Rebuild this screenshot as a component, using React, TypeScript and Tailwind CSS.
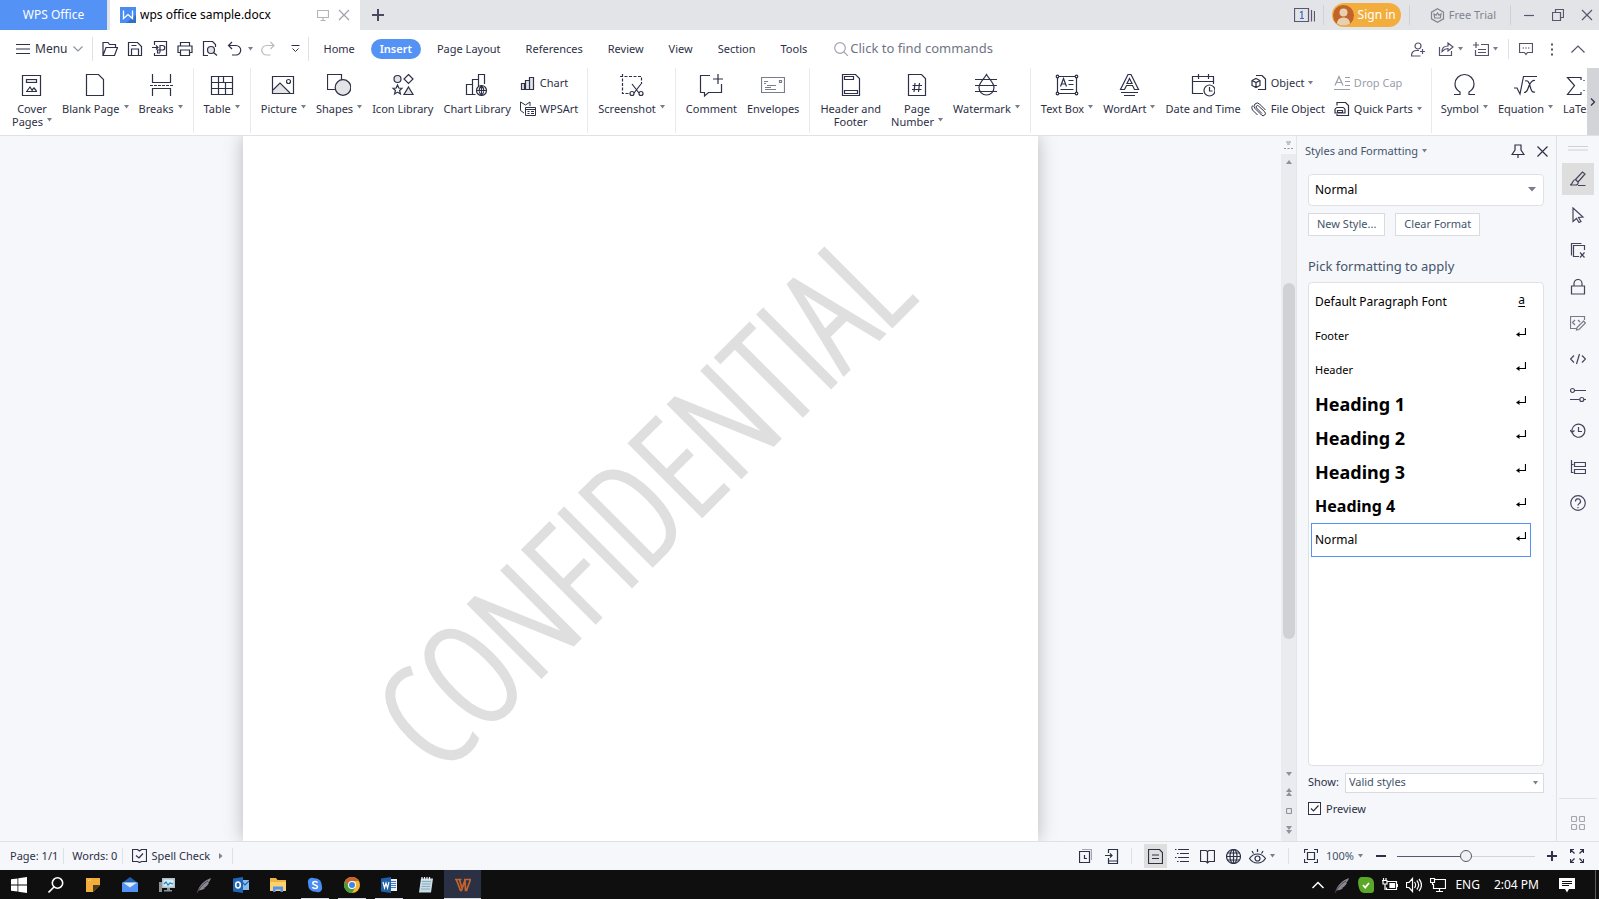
import React, { useState } from 'react';

type IconProps = { w?: number; h?: number; className?: string; children: React.ReactNode };

const Icon = ({ w = 16, h = 16, className = '', children }: IconProps) => (
  <svg
    width={w}
    height={h}
    viewBox={`0 0 ${w} ${h}`}
    fill="none"
    stroke="currentColor"
    strokeWidth="1.2"
    className={`shrink-0 ${className}`}
    aria-hidden="true"
  >
    {children}
  </svg>
);

const Caret = ({ className = '' }: { className?: string }) => (
  <svg width="5" height="4" viewBox="0 0 5 4" className={`shrink-0 ${className}`} aria-hidden="true">
    <path d="M0 0h5L2.5 3.5z" fill="#7a7d8a" />
  </svg>
);

const Sep = ({ className = '' }: { className?: string }) => <span className={`w-px shrink-0 ${className}`} />;

/* ---------- Ribbon icons, drawn on a 24px grid ---------- */

const ribbonIcons: Record<string, React.ReactNode> = {
  cover: (
    <>
      <path d="M2.5 2.5h18v20h-18z" />
      <path d="M6.5 6.5h10v3h-10z" fill="#e3e4e8" />
      <path d="M6 18.500h11M7 18l3-4 2.500 4M12 17l2-2 2.500 3" />
    </>
  ),
  blank: <path d="M3.500 1.500h12l5 5v16h-17z" />,
  breaks: (
    <>
      <path d="M3.500 1v8.500h18V1M3.500 23v-7.500h18V23" />
      <path d="M1 12.500h23" strokeDasharray="3 1" />
    </>
  ),
  table: <path d="M1.500 3.500h21v18h-21zM1.500 9.500h21M1.500 15.500h21M8.500 3.500v18M15.500 9.500v12M13.500 3.500v6" />,
  picture: (
    <>
      <path d="M2 18l7-7 10 10H2z" fill="#e3e4e8" stroke="none" />
      <path d="M1.500 3.500h21v17h-21zM2 17l7-7 10 10" />
      <circle cx="17.500" cy="8.500" r="2" />
    </>
  ),
  shapes: (
    <>
      <path d="M.5 1.500h14v15H.5z" />
      <circle cx="16" cy="14.500" r="7.800" fill="#e3e4e8" />
    </>
  ),
  iconlib: (
    <>
      <circle cx="6.500" cy="6" r="3.500" fill="#e3e4e8" />
      <path d="M17.500 1.500l4.500 4.500-4.500 4.500L13 6z" />
      <path d="M6.500 12l1.300 3 3.200.3-2.400 2.200.8 3.500-2.900-1.900L3.600 21l.8-3.500L2 15.300l3.200-.3z" />
      <path d="M17.500 14l4.500 7.500h-9z" fill="#e3e4e8" />
    </>
  ),
  chartlib: (
    <>
      <path d="M1.500 21.500v-10h6v10zM7.500 20V6.500h6V13M13.500 10V1.500h6V11M7.500 21.500h3" />
      <circle cx="16.500" cy="17.500" r="5" fill="#fff" />
      <path d="M11.500 17.500h10M16.500 12.500v10M16.500 12.500c-3 3-3 7 0 10M16.500 12.500c3 3 3 7 0 10" />
    </>
  ),
  screenshot: (
    <>
      <path d="M0 3.500h21.500V11M2.500 1v19.500H9" strokeDasharray="3 1.500" />
      <path d="M12 11l7 9M21 11l-7 9" />
      <circle cx="12" cy="20.500" r="2" />
      <circle cx="21" cy="20.500" r="2" />
    </>
  ),
  comment: (
    <path d="M11 2.500H1.500v17h4v3.500l4-3.500h13V11M19 1v10M14 6h10" />
  ),
  envelope: (
    <g stroke="#7a7d8a">
      <path d="M.5 4.500h23v15H.5zM3 8.500h4M3 10.500h2M6 12.500h9M4 16.500h11M4 14.500h6" />
      <path d="M18.500 7.500h2v2h-2z" />
    </g>
  ),
  header: (
    <>
      <path d="M3.500 1.500h13l4 4v17h-17z" />
      <path d="M5.500 3.500h9v3h-9zM5.500 17.500h13v3h-13z" />
    </>
  ),
  pagenum: (
    <>
      <path d="M3.500 1.500h13l4 4v17h-17z" />
      <path d="M10 10l-1 9M14.500 10l-1 9M7.500 12.500h9.500M7 16.500h9.500" />
    </>
  ),
  watermark: (
    <>
      <path d="M12.500 1.500c-2 4-7.500 8-7.500 13a7.500 7.500 0 0015 0c0-5-5.500-9-7.500-13z" />
      <path d="M1 6.500h22M1 12.500h22M1 18.500h22" />
    </>
  ),
  textbox: (
    <>
      <path d="M2.500 3.500h19v17h-19z" />
      <path d="M5.500 13.500l3-8 3 8M6.500 11h4M13.500 7.500h5M13.500 11.500h5M5.500 16.500h13" />
      <g fill="#fff">
        <circle cx="2.500" cy="3.500" r="1.300" />
        <circle cx="21.500" cy="3.500" r="1.300" />
        <circle cx="2.500" cy="20.500" r="1.300" />
        <circle cx="21.500" cy="20.500" r="1.300" />
      </g>
    </>
  ),
  wordart: (
    <>
      <path d="M11 1.500h3l7.500 15h-4l-2-4h-6l-2 4h-4zM12.500 5.500l2.500 5h-5z" />
      <path d="M4 19.500h17M7 22.500h11" />
    </>
  ),
  date: (
    <>
      <path d="M12 20.500H1.500v-17h21V11M1.500 8.500h21M7.500 1v5M17.500 1v5" />
      <circle cx="18.500" cy="17.500" r="5.500" fill="#fff" />
      <path d="M18.500 14v4h3" />
    </>
  ),
  symbol: (
    <path d="M2 21.500h6v-2.500C4.500 17 3 14 3 11a9.500 9.500 0 0119 0c0 3-1.500 6-5 8v2.500h6" />
  ),
  equation: (
    <path d="M1 15h3l3 6L10.500 3.500H24M12 8c3-1 4 1 5 5s2 7 5 6M22 7.500c-4-1-6 5-7 8s-2 4-4 4" />
  ),
  latex: <path d="M15 7V4.500H1.500l7 8-7 9H15V19M18 7v1M18 17v1" />,
};

/* ---------- Ribbon pieces ---------- */

const RibbonButton = ({ icon, lines, caret }: { icon: string; lines: string[]; caret?: boolean }) => (
  <button className="flex shrink-0 flex-col items-center px-[5px] pt-[5px] hover:bg-slate-100">
    <Icon w={24} h={24}>{ribbonIcons[icon]}</Icon>
    <span className="mt-[5px] flex flex-col items-center leading-[13px]">
      {lines.map((line, i) => (
        <span key={line} className="flex items-center gap-1 whitespace-nowrap">
          {line}
          {caret && i === lines.length - 1 && <Caret className="mb-1" />}
        </span>
      ))}
    </span>
  </button>
);

const SmallButton = ({ icon, label, caret, muted }: { icon: React.ReactNode; label: string; caret?: boolean; muted?: boolean }) => (
  <button className={`flex h-[26px] items-center gap-1 whitespace-nowrap ${muted ? 'text-[#9a9eab]' : ''}`}>
    <Icon>{icon}</Icon>
    {label}
    {caret && <Caret />}
  </button>
);

const Group = ({ children, last }: { children: React.ReactNode; last?: boolean }) => (
  <div className={`flex shrink-0 ${last ? 'px-1' : 'border-r border-[#e9eaed] px-[5px]'}`}>{children}</div>
);

const Ribbon = () => (
  <div className="flex shrink-0 border-b border-[#dfe1e5] bg-white text-[11px] text-[#2d3046]">
    <div className="flex h-[67px] min-w-0 flex-1 overflow-hidden pb-[2px] pl-[2px]">
      <Group>
        <RibbonButton icon="cover" lines={['Cover', 'Pages']} caret />
        <RibbonButton icon="blank" lines={['Blank Page']} caret />
        <RibbonButton icon="breaks" lines={['Breaks']} caret />
      </Group>
      <Group>
        <RibbonButton icon="table" lines={['Table']} caret />
      </Group>
      <Group>
        <RibbonButton icon="picture" lines={['Picture']} caret />
        <RibbonButton icon="shapes" lines={['Shapes']} caret />
        <RibbonButton icon="iconlib" lines={['Icon Library']} />
        <RibbonButton icon="chartlib" lines={['Chart Library']} />
        <div className="flex shrink-0 flex-col px-1 pt-[2px]">
          <SmallButton icon={<path d="M1.500 14.500v-6h3v6zM5.500 14.500v-9h4v9zM9.500 14.500V2.500h4v12z" fill="#e3e4e8" />} label="Chart" />
          <SmallButton
            icon={
              <g strokeWidth="1">
                <path d="M4 12l-3.500-2.500V1l5 3 4.500-3v4" />
                <path d="M5.500 6.500h10v8h-10zM5.500 8.500h10M7.500 10.500h2M7.500 12.500h2M11 10.500h3M11 12.500h3" />
              </g>
            }
            label="WPSArt"
          />
        </div>
      </Group>
      <Group>
        <RibbonButton icon="screenshot" lines={['Screenshot']} caret />
      </Group>
      <Group>
        <RibbonButton icon="comment" lines={['Comment']} />
        <RibbonButton icon="envelope" lines={['Envelopes']} />
      </Group>
      <Group>
        <RibbonButton icon="header" lines={['Header and', 'Footer']} />
        <RibbonButton icon="pagenum" lines={['Page', 'Number']} caret />
        <RibbonButton icon="watermark" lines={['Watermark']} caret />
      </Group>
      <Group>
        <RibbonButton icon="textbox" lines={['Text Box']} caret />
        <RibbonButton icon="wordart" lines={['WordArt']} caret />
        <RibbonButton icon="date" lines={['Date and Time']} />
        <div className="flex shrink-0 flex-col px-[5px] pt-[2px]">
          <SmallButton
            icon={
              <>
                <path d="M5 .5h6l3.500 3.500v10.500H7" />
                <path d="M5 3.500l4 2v5l-4 2-4-2v-5zM1 5.500l4 2 4-2M5 7.500v5" />
              </>
            }
            label="Object"
            caret
          />
          <SmallButton
            icon={<path d="M14.500 9L8.500 3a3 3 0 00-4.500 4.500l6.500 6.500a2.200 2.200 0 003.200-3.200L7.500 5a1.200 1.200 0 00-2 2l5.500 5.500M1.500 4.500a4 4 0 000 4.500l5 5" strokeWidth="1" />}
            label="File Object"
          />
        </div>
        <div className="flex shrink-0 flex-col px-1 pt-[2px]">
          <SmallButton icon={<path d="M1 10.500l4-9 4 9M2.500 7.500h5M11 2.500h5M11 6.500h5M11 10.500h5M0 14.500h16" />} label="Drop Cap" muted />
          <SmallButton
            icon={
              <>
                <path d="M3 4.500v-3h8.500l3 3v10H3V13" />
                <path d="M1 8.500a3 3 0 012-2h6a3 3 0 012 2v3.500H1zM3.500 9.500h5v2h-5z" />
              </>
            }
            label="Quick Parts"
            caret
          />
        </div>
      </Group>
      <Group last>
        <RibbonButton icon="symbol" lines={['Symbol']} caret />
        <RibbonButton icon="equation" lines={['Equation']} caret />
        <RibbonButton icon="latex" lines={['LaTeX']} />
      </Group>
    </div>
    <button aria-label="Scroll ribbon" className="flex w-3 items-center justify-center self-stretch bg-[#d3d4d8]">
      <Icon w={6} h={8}><path d="M1 .5L4.500 4 1 7.500" /></Icon>
    </button>
  </div>
);

/* ---------- Title bar ---------- */

const TitleBar = () => (
  <header className="flex h-[30px] shrink-0 bg-[#e2e4e8] text-[12px] text-[#5b5570]">
    <button className="w-[107px] bg-[#5592f5] text-white">WPS Office</button>
    <div className="ml-[3px] flex w-[250px] items-center bg-white pr-[10px] pl-[10px] text-black">
      <svg width="16" height="16" viewBox="0 0 16 16" aria-hidden="true">
        <path d="M0 0h16v16H0z" fill="#4a8df2" />
        <path d="M16 8v8H6z" fill="#2f6fc4" />
        <path d="M3.500 3.500v8l4.500-4 4.500 4v-8" fill="none" stroke="#fff" strokeWidth="1.300" />
      </svg>
      <span className="ml-1 flex-1 whitespace-nowrap">wps office sample.docx</span>
      <Icon w={12} h={12} className="mr-[9px] text-[#b3b5bd]">
        <path d="M.5 1.500h11v7H.5zM6 8.500v3M3.500 11.500h5" />
      </Icon>
      <button aria-label="Close tab">
        <Icon w={12} h={12} className="text-[#9fa1ab]"><path d="M1 1l10 10M11 1L1 11" /></Icon>
      </button>
    </div>
    <button aria-label="New tab" className="px-3">
      <Icon w={12} h={12} className="text-[#4c4862]"><path d="M6 0v12M0 6h12" strokeWidth="2" /></Icon>
    </button>
    <div className="ml-auto flex items-center">
      <button aria-label="Windows" className="px-2 text-[#5b5570]">
        <Icon w={21} h={14}>
          <path d="M.5 .5h14v13H.5zM17.500 2v11.500M20.500 3v10.500" />
          <path d="M6 4.500l2-1v7M6 10.500h4" stroke="#3c6fb8" />
        </Icon>
      </button>
      <Sep className="mr-2 h-5 bg-[#cfd1d6]" />
      <button className="flex h-6 items-center gap-1 rounded-full bg-[#f3ad3d] pr-[5px] pl-px text-white">
        <svg width="21" height="21" viewBox="0 0 21 21" aria-hidden="true">
          <circle cx="10.500" cy="10.500" r="10.500" fill="#c0642c" />
          <circle cx="10.500" cy="7.500" r="4" fill="#e8cfae" />
          <path d="M4 18.500c0-8 13-8 13 0a10.500 10.500 0 01-13 0z" fill="#e8cfae" />
        </svg>
        Sign in
      </button>
      <Sep className="ml-2 h-5 bg-[#cfd1d6]" />
      <button className="flex items-center gap-1 pr-[14px] pl-5 text-[11px] text-[#85838f]">
        <Icon w={15} h={15}>
          <path d="M7.500 .8l6 3.300v6.800l-6 3.300-6-3.300V4.100z" />
          <path d="M4 6l2 1.200L7.500 5 9 7.200 11 6l-.7 4H4.700z" />
        </Icon>
        Free Trial
      </button>
      <Sep className="h-5 bg-[#cfd1d6]" />
      <div className="flex gap-[17px] pr-[6px] pl-3">
        <button aria-label="Minimize"><Icon w={12} h={12}><path d="M1 6.500h10" /></Icon></button>
        <button aria-label="Restore"><Icon w={12} h={12}><path d="M.5 3.500h8v8h-8zM3.500 3V.5h8v8H9" /></Icon></button>
        <button aria-label="Close"><Icon w={12} h={12}><path d="M1 1l10 10M11 1L1 11" /></Icon></button>
      </div>
    </div>
  </header>
);

/* ---------- Menu bar ---------- */

const quickTools: { label: string; art: React.ReactNode }[] = [
  { label: 'Open', art: <path d="M1 14.500V1.500h5l1.500 2h6v3M1 14.500l3-8h11.500l-3 8z" /> },
  { label: 'Save', art: <path d="M1.500 1.500h9l4 4v9h-13zM4.500 14v-6h7v6M4.500 4.500h5" /> },
  { label: 'Export PDF', art: <path d="M2.500 4V.5h12v14h-12V12M0 6.500h6M4 4.500l2 2-2 2M8 11.500V4.500h2.500a2 2 0 010 4.500H5.500v3h2.500" /> },
  { label: 'Print', art: <path d="M3.500 5V1.500h9V5M3.500 11.500h-2.500v-6.500h14v6.500h-2.500M3.500 9h9v5.500h-9z" /> },
  {
    label: 'Print preview',
    art: (
      <>
        <path d="M6 14.500H1.500V.5h9l3 3V6" />
        <circle cx="9" cy="9" r="3.500" fill="#e3e4e8" />
        <path d="M11.500 11.500l3.500 3" />
      </>
    ),
  },
  { label: 'Undo', art: <path d="M5 1L1.500 4.500 5 8M1.500 4.500h7.500a4.500 4.500 0 010 9.500H5" /> },
];

const tabs = ['Home', 'Insert', 'Page Layout', 'References', 'Review', 'View', 'Section', 'Tools'];

const MenuBar = () => {
  const [active, setActive] = useState('Insert');

  return (
    <nav className="flex h-[38px] shrink-0 items-center bg-white text-[11px] text-[#2d3046]">
      <button className="flex items-center pl-4 text-[12px]">
        <Icon w={14} h={12} className="mr-[5px]"><path d="M0 1.500h14M0 6h14M0 10.500h14" /></Icon>
        Menu
        <Icon w={10} h={6} className="ml-[6px] text-[#8f919c]"><path d="M.5 .5L5 5 9.500 .5" /></Icon>
      </button>
      <Sep className="ml-[9px] h-6 bg-[#dfe1e5]" />
      <div className="flex items-center gap-[9px] pl-[9px]">
        {quickTools.map((t) => (
          <button key={t.label} aria-label={t.label}><Icon>{t.art}</Icon></button>
        ))}
      </div>
      <Caret className="ml-[5px]" />
      <button aria-label="Redo" className="ml-2 text-[#b9bbc3]">
        <Icon><path d="M9.500 1L13 4.500 9.500 8M13 4.500H5.500a4.500 4.500 0 000 9.500h4" /></Icon>
      </button>
      <button aria-label="Customize toolbar" className="ml-[14px]">
        <Icon w={9} h={8}><path d="M.5 .5h8M1.500 3.500l3 3 3-3" strokeWidth="1" /></Icon>
      </button>
      <Sep className="mr-[5px] ml-2 h-6 bg-[#dfe1e5]" />
      <div className="flex gap-[7px]">
        {tabs.map((t) => (
          <button
            key={t}
            onClick={() => setActive(t)}
            className={`h-5 rounded-full px-[9px] whitespace-nowrap ${active === t ? 'bg-[#5592f5] font-semibold text-white' : ''}`}
          >
            {t}
          </button>
        ))}
      </div>
      <label className="ml-[18px] flex flex-1 items-center gap-[2px] text-[#6f7584]">
        <Icon w={14} h={14} className="text-[#a5a7b0]">
          <circle cx="6" cy="6" r="5.300" />
          <path d="M10 10l4 4" />
        </Icon>
        <input aria-label="Find commands" placeholder="Click to find commands" className="w-full min-w-0 text-[13px] outline-none placeholder:text-[#6f7584]" />
      </label>
      <div className="flex items-center pr-[14px] text-[#54526b]">
        <button aria-label="Add collaborator">
          <Icon w={15} h={15}><circle cx="7" cy="4" r="3" /><path d="M8 8.500H5.500c-3 0-5 2-5 5.500h9M11.500 7v5M9 9.500h5" /></Icon>
        </button>
        <button aria-label="Share" className="ml-[12px] flex items-center gap-1">
          <Icon w={16} h={14}><path d="M1.500 5v8.500h12V9M4 9.500c0-4 3-5.500 6-5.500V1l5 4-5 4V6.500c-3 0-4 1-6 3z" /></Icon>
          <Caret />
        </button>
        <button aria-label="Fields" className="ml-[10px] flex items-center gap-1">
          <Icon w={16} h={14}><path d="M3 0v6M0 3h6M2.500 8v5.500h13v-11H8M5 7.500h8M5 10.500h8" /></Icon>
          <Caret />
        </button>
        <Sep className="mx-[10px] h-5 bg-[#dfe1e5]" />
        <button aria-label="Comments">
          <Icon w={14} h={13}><path d="M.5 .5h13v9h-5l-1.500 2-1.500-2h-5z" /><path d="M3.500 5h1.500M6.200 5h1.500M9 5h1.500" /></Icon>
        </button>
        <button aria-label="More" className="ml-[17px]">
          <Icon w={4} h={13}><path d="M1 1.500h2M1 6.500h2M1 11.500h2" strokeWidth="2" /></Icon>
        </button>
        <button aria-label="Collapse ribbon" className="ml-[17px]">
          <Icon w={14} h={8}><path d="M.5 7.500L7 1l6.500 6.500" /></Icon>
        </button>
      </div>
    </nav>
  );
};

/* ---------- Document ---------- */

const Document = () => (
  <main className="flex min-w-0 flex-1 justify-center overflow-hidden bg-[#f5f7fa]">
    <article className="flex w-[795px] items-center justify-center bg-white pt-5 shadow-[0_0_18px_rgba(0,0,0,0.25)]">
      <p className="-rotate-[45deg] font-['Open_Sans_Condensed_Light','Open_Sans_Condensed','Noto_Sans',sans-serif] text-[144px] leading-none font-light whitespace-nowrap text-[#dfdfdf] [-webkit-text-stroke:3px_#dfdfdf]">
        CONFIDENTIAL
      </p>
    </article>
  </main>
);

const ScrollBar = () => (
  <div className="flex w-[15px] shrink-0 flex-col items-center bg-[#eaebef] text-[#8f919c]">
    <span className="flex h-[18px] w-full items-center justify-center bg-[#f5f7fa]">
      <Icon w={9} h={9}><path d="M2 1h5M3 3h3M0 7.500h2M3.500 7.500h2M7 7.500h2" /></Icon>
    </span>
    <button aria-label="Scroll up" className="mt-[6px]">
      <svg width="6" height="4" viewBox="0 0 6 4"><path d="M0 4h6L3 0z" fill="#8f919c" /></svg>
    </button>
    <div className="flex w-full flex-1 flex-col items-center">
      <span className="h-[119px]" />
      <span className="h-[356px] w-3 rounded-full bg-[#d0d1d4]" />
    </div>
    <div className="flex flex-col items-center gap-3 pb-[7px]">
      <button aria-label="Scroll down">
        <svg width="6" height="4" viewBox="0 0 6 4"><path d="M0 0h6L3 4z" fill="#8f919c" /></svg>
      </button>
      <button aria-label="Previous page">
        <svg width="6" height="8" viewBox="0 0 6 8"><path d="M0 4h6L3 0zM0 8h6L3 4z" fill="#8f919c" /></svg>
      </button>
      <button aria-label="Browse object"><Icon w={6} h={6}><rect x=".5" y=".5" width="5" height="5" rx="1" /></Icon></button>
      <button aria-label="Next page">
        <svg width="6" height="8" viewBox="0 0 6 8"><path d="M0 0h6L3 4zM0 4h6L3 8z" fill="#8f919c" /></svg>
      </button>
    </div>
  </div>
);

/* ---------- Styles and Formatting pane ---------- */

const styles = [
  { name: 'Default Paragraph Font', size: 'text-[12px]', mark: 'a' },
  { name: 'Footer', size: 'text-[11px]' },
  { name: 'Header', size: 'text-[11px]' },
  { name: 'Heading 1', size: 'text-[18px] font-bold' },
  { name: 'Heading 2', size: 'text-[18px] font-bold' },
  { name: 'Heading 3', size: 'text-[18px] font-bold' },
  { name: 'Heading 4', size: 'text-[16px] font-bold' },
  { name: 'Normal', size: 'text-[12px]' },
];

const StylesPane = () => {
  const [selected, setSelected] = useState('Normal');

  return (
    <aside className="flex w-[260px] shrink-0 flex-col border-l border-[#e3e5e9] bg-[#f5f7fa] pr-3 pl-[11px] text-[11px] text-[#44546a]">
      <div className="-ml-[3px] flex h-[30px] items-center">
        <button className="flex items-center gap-1 whitespace-nowrap">Styles and Formatting <Caret /></button>
        <button aria-label="Pin pane" className="ml-auto text-[#2d3046]">
          <Icon w={14} h={14}><path d="M4 1h6v5l3 4.500H1L4 6zM7 10.500V14" /></Icon>
        </button>
        <button aria-label="Close pane" className="ml-3 -mr-1 text-[#2d3046]">
          <Icon w={11} h={11}><path d="M.5 .5l10 10M10.500 .5l-10 10" /></Icon>
        </button>
      </div>
      <div className="relative mt-2">
        <select
          aria-label="Current style"
          value={selected}
          onChange={(e) => setSelected(e.target.value)}
          className="h-8 w-full appearance-none rounded-sm border border-[#dfe1e5] bg-white px-[6px] text-[12px] text-black"
        >
          {styles.map((s) => <option key={s.name}>{s.name}</option>)}
        </select>
        <svg width="8" height="5" viewBox="0 0 8 5" className="pointer-events-none absolute top-[13px] right-2" aria-hidden="true">
          <path d="M0 0h8L4 4.500z" fill="#7a7d8a" />
        </svg>
      </div>
      <div className="mt-[7px] flex gap-[10px]">
        <button className="h-[23px] border border-[#d9dbe0] bg-white px-2">New Style...</button>
        <button className="h-[23px] border border-[#d9dbe0] bg-white px-2">Clear Format</button>
      </div>
      <h2 className="mt-5 text-[13px] leading-5">Pick formatting to apply</h2>
      <ul className="mt-[6px] min-h-0 flex-1 rounded-sm border border-[#dfe1e5] bg-white pt-[2px] pr-3 pl-[2px] text-black">
        {styles.map((s) => (
          <li key={s.name}>
            <button
              onClick={() => setSelected(s.name)}
              className={`flex h-[34px] w-full items-center justify-between border pr-1 pl-[3px] text-left whitespace-nowrap ${selected === s.name ? 'border-[#5592f5]' : 'border-transparent'}`}
            >
              <span className={s.size}>{s.name}</span>
              {s.mark ? (
                <span className="mr-px mb-1 text-[12px] leading-3 underline underline-offset-2">{s.mark}</span>
              ) : (
                <Icon w={10} h={9} className="mb-2">
                  <path d="M9.500 0v6.500H2" />
                  <path d="M0 6.500l3.500-2.500v5z" fill="currentColor" stroke="none" />
                </Icon>
              )}
            </button>
          </li>
        ))}
      </ul>
      <div className="mt-[7px] flex items-center gap-[6px]">
        <label htmlFor="show" className="text-[#2d3046]">Show:</label>
        <div className="relative flex-1">
          <select id="show" className="block h-5 w-full appearance-none border border-[#d9dbe0] bg-white px-[3px] text-[#44546a]">
            <option>Valid styles</option>
          </select>
          <Caret className="pointer-events-none absolute top-2 right-[6px]" />
        </div>
      </div>
      <label className="mt-2 mb-[24px] flex items-center gap-[5px] text-[#2d3046]">
        <span className="relative flex">
          <input type="checkbox" defaultChecked className="peer size-[13px] appearance-none border border-[#2d3046] bg-white" />
          <Icon w={13} h={13} className="pointer-events-none absolute top-0 left-0 hidden peer-checked:block">
            <path d="M3 6.500L5.500 9l5-5.500" />
          </Icon>
        </span>
        Preview
      </label>
    </aside>
  );
};

/* ---------- Side tool strip ---------- */

const sideTools: { label: string; art: React.ReactNode }[] = [
  { label: 'Styles', art: <path d="M5.500 8.500L12.500 1l2.500 2-7 8zM5.500 8.500l2.500 2.500M5.500 8.500c-3 0-2 3.500-5 5.500h5c2 0 3-1.500 2.500-3M8 14.500h7.500" /> },
  { label: 'Select', art: <path d="M3 1l10 9-4.500.5 2.500 4-2 1-2.500-4L3 14.500z" /> },
  { label: 'Clipboard', art: <path d="M1.500 12.500v-12h10M9 13.500H3.500v-11h11V7M10 9.500l4.500 5M14.500 9.500l-4.500 5" /> },
  { label: 'Protect', art: <path d="M1.500 7h13v8h-13zM4 7V4.500a4 4 0 018 0V7" /> },
  { label: 'Edit code', art: <g stroke="#7a7888"><path d="M7 13.500H.5v-12h14V5M5 5L2.500 7.500 5 10M8 5l2 2M13.500 6l2 2-6.500 6.500-2.500.5.500-2.500z" /></g> },
  { label: 'Code', art: <path d="M4 4.500L.5 8 4 11.500M12 4.500L15.500 8 12 11.500M9.500 3l-3 10" /> },
  { label: 'Settings', art: <><path d="M4.500 3.500H16M0 12.500h9.500M14 12.500h2" /><circle cx="2.500" cy="3.500" r="2" /><circle cx="11.800" cy="12.500" r="2" /></> },
  { label: 'History', art: <path d="M2.300 10A6.500 6.500 0 102 6.500v3M0 7l2 2.500L4.500 7.500M8.500 4v4.500h3.500" /> },
  { label: 'Outline', art: <path d="M1.500 1v12.500h2M1.500 5.500h2M4.500 3.500h11v4h-11zM4.500 10.500h11v4h-11z" /> },
  { label: 'Help', art: <><circle cx="8" cy="8" r="7.300" /><path d="M5.500 6.500a2.500 2.500 0 113.500 2.200c-.8.400-1 .8-1 1.800M8 12v1.200" /></> },
];

const SideStrip = () => (
  <div className="flex w-[43px] shrink-0 flex-col items-center border-l border-[#dfe1e5] bg-[#f5f7fa] text-[#45435c]">
    <Icon w={20} h={5} className="mt-[10px] text-[#cfd1d6]"><path d="M0 .5h20M0 4h20" /></Icon>
    <div className="mt-3 flex flex-col gap-1">
      {sideTools.map((t, i) => (
        <button key={t.label} aria-label={t.label} className={`flex size-8 items-center justify-center ${i === 0 ? 'bg-[#dedede]' : ''}`}>
          <Icon>{t.art}</Icon>
        </button>
      ))}
    </div>
    <button aria-label="All tools" className="mt-auto flex h-[43px] w-[38px] items-center justify-center border-t border-[#dfe1e5] pt-[6px] text-[#a5a7b0]">
      <Icon w={14} h={14}>
        <rect x=".5" y=".5" width="5" height="5" rx="1" />
        <rect x="8.500" y=".5" width="5" height="5" rx="1" />
        <rect x=".5" y="8.500" width="5" height="5" rx="1" />
        <rect x="8.500" y="8.500" width="5" height="5" rx="1" />
      </Icon>
    </button>
  </div>
);

/* ---------- Status bar ---------- */

const StatusBar = () => (
  <footer className="flex h-[29px] shrink-0 items-center border-t border-[#dfe1e5] bg-[#f5f7fa] text-[11px] text-[#2d3046]">
    <span className="pr-[5px] pl-[10px]">Page: 1/1</span>
    <Sep className="h-4 bg-[#dfe1e5]" />
    <span className="pr-[5px] pl-2">Words: 0</span>
    <Sep className="h-4 bg-[#dfe1e5]" />
    <button className="flex items-center gap-1 px-[9px]">
      <Icon w={15} h={14}><path d="M.5 .5h5l2 1.500 2-1.500h5v12h-5l-2 1-2-1h-5zM4 6.500L7 9l4-4.500" /></Icon>
      Spell Check
      <svg width="4" height="6" viewBox="0 0 4 6" className="ml-[5px]"><path d="M0 0v6l3.500-3z" fill="#7a7d8a" /></svg>
    </button>
    <Sep className="h-4 bg-[#dfe1e5]" />
    <div className="ml-auto flex items-center">
      <button aria-label="Recent">
        <Icon w={13} h={14}><path d="M3 .5h9.500V11" stroke="#a5a7b0" /><path d="M.5 2.500h10v11H.5zM5.500 6v3.500H8" /></Icon>
      </button>
      <button aria-label="Send to phone" className="ml-[13px]">
        <Icon w={14} h={15}><path d="M3.500 4V.5h9v14h-9V9M0 6.500h7M5 4.500l2 2-2 2M3.500 12h9" /></Icon>
      </button>
      <Sep className="mx-3 h-4 bg-[#dfe1e5]" />
      <button aria-label="Page view" className="flex h-6 w-[23px] items-center justify-center bg-[#dedede]">
        <Icon w={15} h={15}><path d="M.5 .5h11l3 3v11H.5zM4 6h7M4 9.500h7" /></Icon>
      </button>
      <button aria-label="Outline view" className="ml-2">
        <Icon w={14} h={14}><path d="M3 .5h11M5 4.500h9M3 8.500h11M5 12.500h9M0 .5h1.500M2 4.500h1.500M0 8.500h1.500M2 12.500h1.500" /></Icon>
      </button>
      <button aria-label="Reading view" className="ml-[11px]">
        <Icon w={15} h={15}><path d="M.5 1.500h5.500l1.500 1 1.500-1h5.500v11H9l-1.500 1.500-1.500-1.500H.5zM7.500 2.500V14" /></Icon>
      </button>
      <button aria-label="Web view" className="ml-[11px]">
        <Icon w={15} h={15}><circle cx="7.500" cy="7.500" r="7" /><ellipse cx="7.500" cy="7.500" rx="3.500" ry="7" /><path d="M7.500 .5v14M.5 7.500h14M1.500 4h12M1.500 11h12" /></Icon>
      </button>
      <button aria-label="Eye protection" className="ml-2 flex items-center gap-1">
        <Icon w={17} h={15}><path d="M.5 9.500c4-6 12-6 16 0-4 6-12 6-16 0zM8.500 0v3M3 2l1.500 2.500M14 2l-1.500 2.500" /><circle cx="8.500" cy="9.500" r="2.500" /></Icon>
        <Caret />
      </button>
      <Sep className="mr-[15px] ml-[13px] h-4 bg-[#dfe1e5]" />
      <button aria-label="Fit page">
        <Icon w={14} h={14}><path d="M.5 4V.5H4M10 .5h3.500V4M13.500 10v3.500H10M4 13.500H.5V10M3.500 3.500h7v7h-7z" /></Icon>
      </button>
      <button className="ml-2 flex items-center gap-1 text-[#44546a]">100% <Caret /></button>
      <button aria-label="Zoom out" className="ml-[13px]"><Icon w={10} h={10}><path d="M0 5h10" strokeWidth="2" /></Icon></button>
      <input
        type="range"
        aria-label="Zoom"
        defaultValue={50}
        className="mr-3 ml-[11px] h-3 w-[138px] appearance-none bg-[linear-gradient(to_right,#5b5570_50%,#d3d4d8_50%)] bg-[length:100%_1px] bg-center bg-no-repeat [&::-webkit-slider-thumb]:size-3 [&::-webkit-slider-thumb]:appearance-none [&::-webkit-slider-thumb]:rounded-full [&::-webkit-slider-thumb]:border [&::-webkit-slider-thumb]:border-[#5b5570] [&::-webkit-slider-thumb]:bg-[#f0f1f4]"
      />
      <button aria-label="Zoom in"><Icon w={10} h={10}><path d="M0 5h10M5 0v10" strokeWidth="2" /></Icon></button>
      <button aria-label="Full screen" className="mr-[15px] ml-[13px]">
        <Icon w={14} h={14}><path d="M.5 4V.5H4M.5 .5l4 4M10 .5h3.500V4M13.500 .5l-4 4M13.500 10v3.500H10M13.500 13.500l-4-4M4 13.500H.5V10M.5 13.500l4-4" /></Icon>
      </button>
    </div>
  </footer>
);

/* ---------- Windows taskbar ---------- */

const feather = (
  <>
    <path d="M1 16C3 8 9 3 15 1c-1 3-2 4-3 5l1 0c-2 3-3 4-5 5l1 .3C7 13 4 13.500 2.500 13.500L1 16z" fill="#8d8793" stroke="none" />
    <path d="M1 16C4 10 8 6 12 4" stroke="#3b3640" strokeWidth=".8" />
  </>
);

const apps: { label: string; art: React.ReactNode; open?: boolean; active?: boolean }[] = [
  { label: 'Start', art: <path d="M0 2.300L6.500 1.400v6.200H0zM7.300 1.300L16 0v7.600H7.300zM0 8.400h6.500v6.200L0 13.700zM7.300 8.400H16V16l-8.700-1.300z" fill="#fff" stroke="none" /> },
  { label: 'Search', art: <g stroke="#fff" strokeWidth="1.600"><circle cx="9.500" cy="6" r="5.200" /><path d="M6 10L.5 15.500" /></g> },
  { label: 'Sticky Notes', art: <g stroke="none"><path d="M1 1h14v7l-7 7H1z" fill="#f3ad3d" /><path d="M8 8h7l-7 7z" fill="#4b3a1c" /><path d="M3 3h1v1H3zM5 2.500h1v1H5z" fill="#fbe2b0" /></g> },
  { label: 'Mail', art: <g stroke="none"><path d="M0 6l8-6 8 6v2H0z" fill="#1f5fa8" /><path d="M0 5.500h16V15H0z" fill="#5592f5" /><path d="M1 5.500h14L8 10.500z" fill="#d9ecf8" /></g> },
  { label: 'System Monitor', art: <g stroke="none"><path d="M3 1h13v10H3z" fill="#b9bfc6" /><path d="M4.500 2.500h10v7h-10z" fill="#cdeefa" /><path d="M0 5h3v10H0zM8 11h3v2h2v1.500H5V13h3z" fill="#8d949b" /><path d="M5 7l2-2 2 3 2-2 3 1" stroke="#2f80b8" fill="none" /></g> },
  { label: 'Feather', art: feather },
  { label: 'Outlook', art: <g stroke="none"><path d="M9 3h7v10H9z" fill="#8cbcec" /><path d="M9 5l3 3 4-4" stroke="#1f5fa8" /><path d="M0 1.500L10 0v16L0 14.500z" fill="#1f66b4" /><ellipse cx="5" cy="8" rx="2.300" ry="3" stroke="#fff" strokeWidth="1.500" /></g> },
  { label: 'File Explorer', art: <g stroke="none"><path d="M0 1h6l1.500 2H16v11H0z" fill="#f3b344" /><path d="M0 5h16v9H0z" fill="#fbd36c" /><path d="M3 15V9.500h10V15h-2.500v-2.500h-5V15z" fill="#5592f5" /></g> },
  { label: 'Skype', open: true, art: <g stroke="none"><circle cx="8" cy="8" r="6.800" fill="#4a8df2" /><circle cx="5" cy="5" r="4.200" fill="#4a8df2" /><circle cx="11" cy="11" r="4.200" fill="#4a8df2" /><path d="M10.500 5.800C10 4.200 5.800 4 5.800 6.200c0 2.200 4.700 1.200 4.700 3.600 0 2.200-4.500 2-5 .2" stroke="#fff" strokeWidth="1.500" /></g> },
  { label: 'Chrome', open: true, art: <g stroke="none"><circle cx="8" cy="8" r="8" fill="#f3b62f" /><path d="M1.100 4A8 8 0 0115 4H8L5 10z" fill="#c9622f" /><path d="M1.100 4A8 8 0 008 16l3-5-6-1z" fill="#4a9a3c" /><circle cx="8" cy="8" r="4" fill="#fff" /><circle cx="8" cy="8" r="3" fill="#3f86e8" /></g> },
  { label: 'Word', open: true, art: <g stroke="none"><path d="M9 2h7v12H9z" fill="#e9f1fb" /><path d="M10 4.500h5M10 6.500h5M10 8.500h5M10 10.500h5" stroke="#1f5fa8" strokeWidth=".8" /><path d="M0 1.500L10 0v16L0 14.500z" fill="#1f5fa8" /><path d="M2 5l1.500 6L5 6l1.500 5L8 5" stroke="#fff" /></g> },
  { label: 'Notepad', art: <g stroke="none"><path d="M3 1.500h12L13 15.500H1z" fill="#c9dde6" /><path d="M4 4.500h9M4 7h8.500M3.500 9.500H12M3 12h9" stroke="#7a9fb0" strokeWidth=".8" /><path d="M4 0v3M6.500 0v3M9 0v3M11.500 0v3" stroke="#eceff1" /></g> },
  { label: 'WPS', active: true, art: <path d="M0 2.500h6.500M1.500 3l4 10.500h1L10 3l.500 10.500h1L15.500 2.500H9M4.500 3l2.500 8" stroke="#c8622c" strokeWidth="1.700" /> },
];

const Taskbar = () => (
  <div className="flex h-[29px] shrink-0 items-stretch bg-[#0f0f0f] text-[12px] text-white">
    {apps.map((a) => (
      <button
        key={a.label}
        aria-label={a.label}
        className={`relative flex w-[37px] items-center justify-center ${a.active ? 'bg-[#2b3144]' : ''}`}
      >
        <Icon>{a.art}</Icon>
        {(a.open || a.active) && (
          <span className={`absolute bottom-0 h-px bg-[#d9dbe0] ${a.active ? 'w-full' : 'w-7'}`} />
        )}
      </button>
    ))}
    <div className="ml-auto flex items-center gap-2 pr-[3px]">
      <Icon w={16} h={10}><path d="M2.500 8L8 2.500 13.500 8" strokeWidth="1.500" /></Icon>
      <Icon>{feather}</Icon>
      <svg width="16" height="16" viewBox="0 0 16 16" aria-hidden="true">
        <path d="M3 0h6c5 0 7 3 7 7v6c0 2-1 3-3 3H8c-5 0-6-2-7-5C0 8-1 1 3 0z" fill="#5ba829" />
        <path d="M5 8l2.200 2.500L11 6" stroke="#fff" strokeWidth="1.800" fill="none" />
      </svg>
      <Icon><path d="M5 4.500h9.500v8H4.500v-2M15.500 7v3M0 3.500h5.500M1.500 1v2M4 1v2M1 4v3h4V4M3 7v6" /><path d="M8 6.500h4.500v4H8z" fill="#fff" /></Icon>
      <Icon><path d="M.5 5.500H3l3.500-4v13l-3.500-4H.5zM8.500 5c1.500 2 1.500 4 0 6M10.800 3.500c2.500 3 2.500 6 0 9M13 2c3.300 4 3.300 8 0 12" /></Icon>
      <Icon><path d="M5 2.500h10.500v9H3.500V7M.5 1.500h4v4h-4zM2.500 5.500V8M9.500 11.500v3M6 14.500h7" /></Icon>
      <span className="ml-px">ENG</span>
      <span className="ml-[6px] whitespace-nowrap">2:04 PM</span>
      <svg width="16" height="16" viewBox="0 0 16 16" className="ml-3" aria-hidden="true">
        <path d="M0 1h16v11H10l-2 3.500L6 12H0z" fill="#fff" />
        <path d="M3 4.500h10M3 6.500h10M3 8.500h7" stroke="#0f0f0f" />
      </svg>
      <Sep className="ml-3 h-[29px] bg-[#5a5a5a]" />
    </div>
  </div>
);

const App = () => (
  <div className="flex h-screen flex-col overflow-hidden font-['Noto_Sans',sans-serif]">
    <TitleBar />
    <MenuBar />
    <Ribbon />
    <div className="flex min-h-0 flex-1">
      <Document />
      <ScrollBar />
      <StylesPane />
      <SideStrip />
    </div>
    <StatusBar />
    <Taskbar />
  </div>
);

export default App;
